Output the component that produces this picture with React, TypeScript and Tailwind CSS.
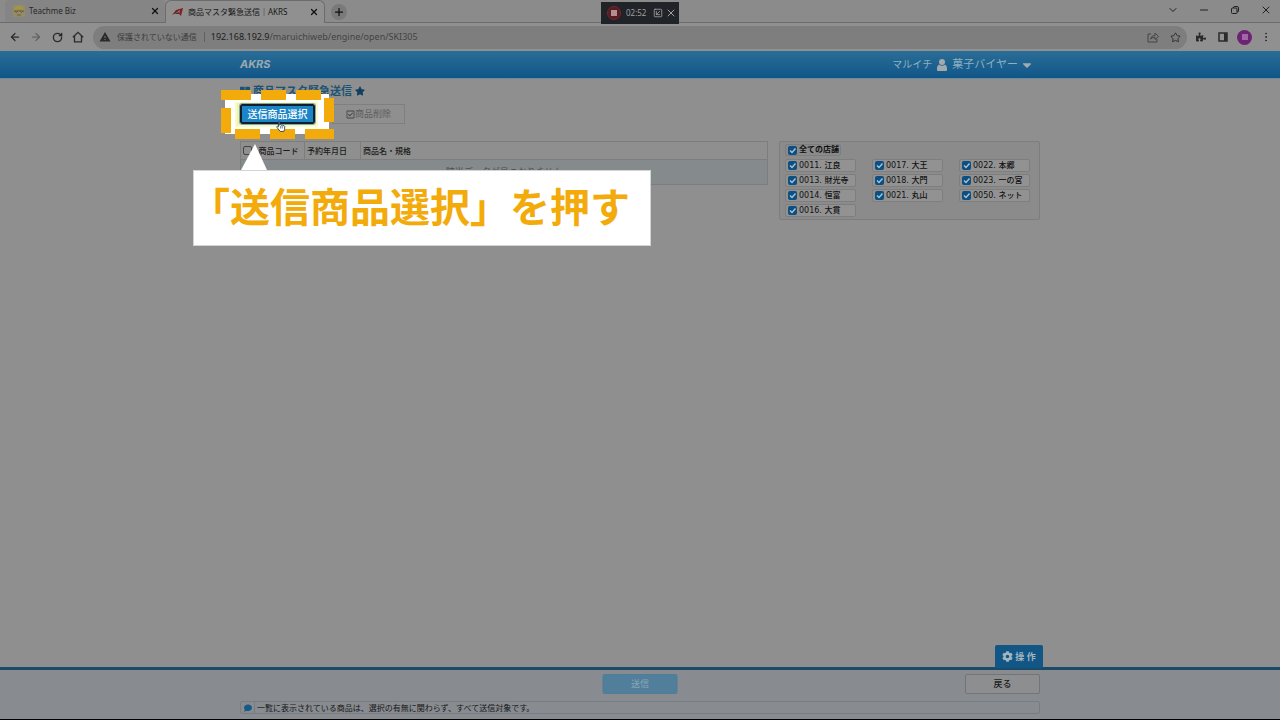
import type { ReactNode } from 'react'
import { FaCaretDown, FaCog, FaComment, FaPuzzlePiece, FaRegCheckSquare, FaStar, FaThLarge } from 'react-icons/fa'
import { MdWarning } from 'react-icons/md'
import { ArrowLeft, ArrowRight, ChevronDown, Minus, MoreVertical, Plus, RotateCw, SquareArrowDownLeft, Star, X } from 'lucide-react'

const storeColumns = [
  ['0011. 江良', '0013. 財光寺', '0014. 恒富', '0016. 大貫'],
  ['0017. 大王', '0018. 大門', '0021. 丸山'],
  ['0022. 本郷', '0023. 一の宮', '0050. ネット'],
]

function IconButton({ label, children }: { label: string; children: ReactNode }) {
  return (
    <button type="button" aria-label={label} className="flex size-4 shrink-0 items-center justify-center">
      {children}
    </button>
  )
}

function TabStrip() {
  return (
    <div className="relative flex h-[23px] items-end border-b border-[#6c6c6c] bg-[#8b8b8b] pl-[5px]">
      <div className="flex h-[22px] w-40 items-center rounded-t bg-[#858585] pl-2 pr-0.5">
        <svg viewBox="0 0 12 12" className="mr-1 size-3" aria-hidden="true">
          <rect width="12" height="12" rx="1" fill="#958b64" />
          <path d="M1 5Q1 1 6 1T11 5L9 4 6 5 3 4Z" fill="#a39446" />
          <path d="M1 6h4q1-1 2 0h4M2 6q1 3 3 0M7 6q2 3 3 0M4 10h4" fill="none" stroke="#5d563b" strokeWidth=".8" />
        </svg>
        <span className="flex-1 text-[8px] text-[#282828]">Teachme Biz</span>
        <IconButton label="タブを閉じる">
          <X className="size-2.5 text-[#111]" strokeWidth={3} />
        </IconButton>
      </div>
      <div className="-mb-px flex h-[23px] w-40 items-center rounded-t-md border border-b-0 border-[#6c6c6c] bg-[#909090] pl-1.5 pr-0.5">
        <svg viewBox="0 0 12 10" className="mr-1 h-2.5 w-3" aria-hidden="true">
          <path d="M0 8 4 3 11 1 9 9 7 7 8 3 4 6Z" fill="#811f23" />
          <path d="M2 7 7 5 7 7Z" fill="#3f3536" />
        </svg>
        <span className="flex-1 whitespace-nowrap text-[8px] text-[#171717]">商品マスタ緊急送信｜AKRS</span>
        <IconButton label="タブを閉じる">
          <X className="size-2.5 text-[#111]" strokeWidth={3} />
        </IconButton>
      </div>
      <button type="button" aria-label="新しいタブ" className="mb-0.5 ml-1.5 flex size-4 items-center justify-center rounded-full bg-[#7a7a7a]">
        <Plus className="size-3 text-[#111]" strokeWidth={2.5} />
      </button>
      <div className="ml-auto flex items-center gap-[15px] self-start pr-1.5 pt-0.5 text-[#202020]">
        <IconButton label="タブを検索">
          <ChevronDown className="size-3" />
        </IconButton>
        <IconButton label="最小化">
          <Minus className="size-3" />
        </IconButton>
        <IconButton label="元に戻す">
          <svg viewBox="0 0 10 10" className="size-2.5" fill="none" stroke="currentColor">
            <rect x="1.5" y="3" width="5.5" height="5.5" rx="1" />
            <path d="M3.5 3V2.5Q3.5 1.500 4.500 1.500H7Q8.500 1.500 8.500 3V6Q8.500 7 7 7" />
          </svg>
        </IconButton>
        <IconButton label="閉じる">
          <X className="size-3" />
        </IconButton>
      </div>
      <Recorder />
    </div>
  )
}

function Recorder() {
  return (
    <div className="absolute left-1/2 top-0.5 z-10 flex h-[22px] w-[78px] -translate-x-1/2 items-center bg-[#202327] pl-1.5 text-[#a0a0a0]">
      <button type="button" aria-label="録画停止" className="flex size-3.5 items-center justify-center rounded-full border border-[#7c2329] bg-[#521f24]">
        <span className="size-1.5 bg-[#b58e90]" />
      </button>
      <span className="ml-[5px] flex-1 text-[8px]">02:52</span>
      <SquareArrowDownLeft className="size-2.5" />
      <X className="mx-0.5 size-3" />
    </div>
  )
}

function Toolbar() {
  return (
    <div className="flex h-7 items-center bg-[#909090] pl-[7px] pr-1.5 text-[#2b2b2b]">
      <div className="flex items-center gap-[5px]">
        <IconButton label="戻る">
          <ArrowLeft className="size-3" strokeWidth={2.5} />
        </IconButton>
        <IconButton label="進む">
          <ArrowRight className="size-3 text-[#636363]" strokeWidth={2.5} />
        </IconButton>
        <IconButton label="再読み込み">
          <RotateCw className="size-[11px]" strokeWidth={3} />
        </IconButton>
        <IconButton label="ホーム">
          <svg viewBox="0 0 12 12" className="size-3" fill="none" stroke="currentColor" strokeWidth="1.3">
            <path d="M.8 6.300 6 1.300 11.200 6.300M2.500 5V10.800H9.500V5" />
          </svg>
        </IconButton>
      </div>
      <div className="ml-[7px] flex h-[23px] flex-1 items-center rounded-full bg-[#7e7e7e] pl-1.5 pr-1">
        <MdWarning className="size-3" />
        <span className="ml-1.5 whitespace-nowrap text-[8px] text-[#3c3c3c]">保護されていない通信</span>
        <span className="ml-[7px] mr-1.5 h-2.5 w-px bg-[#606060]" />
        <span className="text-[9px] text-[#444]">
          <span className="text-[#1d1d1d]">192.168.192.9</span>/maruichiweb/engine/open/SKI305
        </span>
        <div className="ml-auto flex items-center gap-1.5">
          <IconButton label="共有">
            <svg viewBox="0 0 12 12" className="size-3" fill="none" stroke="#444">
              <path d="M4 3H1v8h9V8M3.500 8Q4 4.500 8 4.500V2l3.500 3.500L8 8.500V6.500Q5 6.500 3.500 8Z" />
            </svg>
          </IconButton>
          <IconButton label="ブックマーク">
            <Star className="size-[11px]" />
          </IconButton>
        </div>
      </div>
      <div className="ml-1.5 flex items-center gap-1.5">
        <IconButton label="拡張機能">
          <FaPuzzlePiece className="size-2.5" />
        </IconButton>
        <IconButton label="サイドパネル">
          <svg viewBox="0 0 10 10" className="size-2.5">
            <rect x="1" y="1" width="8" height="8" fill="none" stroke="currentColor" strokeWidth="1.5" />
            <path d="M6 1h3v8H6z" fill="currentColor" />
          </svg>
        </IconButton>
        <button type="button" aria-label="プロフィール" className="flex size-[15px] items-center justify-center rounded-full bg-[#6b2473]">
          <span className="size-1.5 bg-[#a266a6]" />
        </button>
        <IconButton label="メニュー">
          <MoreVertical className="size-3" />
        </IconButton>
      </div>
    </div>
  )
}

function AppHeader() {
  return (
    <header className="h-7 border-b border-[#6b8ba0] bg-linear-to-b from-[#2a6d97] to-[#0f5688]">
      <div className="mx-auto flex h-full max-w-[800px] items-center justify-between pr-1.5 text-[#9aa9b1]">
        <a href="#top" className="font-[Inter,sans-serif] text-[11px] font-bold italic">AKRS</a>
        <button type="button" className="flex items-center gap-1 text-[11px] text-[#8fb0c1]">
          <span className="text-[10px]">マルイチ</span>
          <svg viewBox="0 0 12 12" className="size-3" fill="#a3a9ad" aria-hidden="true">
            <circle cx="6" cy="3" r="3" />
            <path d="M3 5.500Q6 8 9 5.500 11 6.500 11 9V11Q11 12 10 12H2Q1 12 1 11V9Q1 6.500 3 5.500Z" />
          </svg>
          <span>菓子バイヤー</span>
          <FaCaretDown className="-ml-0.5 size-3.5 text-[#a3a9ad]" />
        </button>
      </div>
    </header>
  )
}

// Highlights the send-item button with a dashed marquee
function Spotlight() {
  return (
    <div className="absolute -left-5 -top-3.5">
      <svg width="114" height="50" viewBox="0 0 114 50" aria-hidden="true">
        <path d="M5 4h104v40H5z" fill="#fff" />
        <path d="M15 12h83v25H15z" fill="#fafac8" />
        <path d="M17 13h79v22H17z" fill="#eff3ad" />
        <path
          d="M1 0h30v10H1zM41 0h25v10H41zM76 0h25v10H76zM104 8h10v24h-10zM85 39h29v10H85zM110 42h4v7h-4zM50 39h25v10H50zM15 39h25v10H15zM1 18h10v25H1z"
          fill="#f2ab0a"
        />
      </svg>
    </div>
  )
}

function HandCursor() {
  return (
    <svg viewBox="0 0 12 14" className="absolute left-9 top-4 h-3 w-2.5" aria-hidden="true">
      <path
        d="M3 8V1.500Q3.700.5 4.400 1.500V6l1-.7 1 1 1-.6 1 1 1-.3 1 1V11l-1 2.500H5L1 8.500Q1 7 2 7.300Z"
        fill="#fff"
        stroke="#1d3147"
      />
      <path d="M5.500 7v3M7.500 7v3" stroke="#1d3147" strokeWidth=".7" />
    </svg>
  )
}

function Callout() {
  return (
    <div className="absolute -left-[47px] top-10 z-20">
      <svg width="26" height="26" viewBox="0 0 26 26" className="ml-12" aria-hidden="true">
        <path d="M0 26 14 0 26 26Z" fill="#fff" />
      </svg>
      <p className="h-[76px] w-[458px] whitespace-nowrap border border-[#d4d4d4] bg-white -indent-1 text-[40px] font-bold leading-[72px] text-[#f2ab0a]">
        「送信商品選択」を押す
      </p>
    </div>
  )
}

function StoreCheck({ label, bold }: { label: string; bold?: boolean }) {
  return (
    <label
      className={
        bold
          ? 'flex h-3 w-[56px] items-center gap-0.5 whitespace-nowrap rounded-xs border border-[#7e7e7e] px-0.5 font-bold'
          : 'flex h-[13px] w-[71px] items-center gap-0.5 whitespace-nowrap rounded-xs border border-[#7e7e7e] bg-[#929292] px-0.5'
      }
    >
      <span className="relative flex size-[9px] shrink-0">
        <input type="checkbox" defaultChecked className="size-[9px] appearance-none rounded-xs bg-[#0b4f83]" />
        <svg viewBox="0 0 9 9" className="pointer-events-none absolute inset-0 size-[9px]" fill="none" stroke="#adc3d0" strokeWidth="1.4">
          <path d="M2 4.500 4 6.500 7.500 2.500" />
        </svg>
      </span>
      {label}
    </label>
  )
}

function StorePanel() {
  return (
    <section className="w-[261px] rounded-xs border border-[#7d7d7d] bg-[#8b8b8b] px-[5px] pb-0.5 pt-0.5 font-['DejaVu_Sans','Noto_Sans_CJK_JP',sans-serif] text-[8px] font-medium leading-[10px] text-[#111]">
      <StoreCheck label="全ての店舗" bold />
      <div className="mt-[3px] flex gap-4">
        {storeColumns.map((stores) => (
          <div key={stores[0]} className="flex flex-col gap-0.5">
            {stores.map((store) => (
              <StoreCheck key={store} label={store} />
            ))}
          </div>
        ))}
      </div>
    </section>
  )
}

function ItemTable() {
  return (
    <table className="flex-1 border-collapse border border-[#7d7d7d] text-[8px] leading-[10px] text-[#1b1b1b]">
      <thead>
        <tr className="h-[18px] text-left">
          <th className="w-4 pl-0.5">
            <input type="checkbox" aria-label="すべて選択" className="block size-[9px] appearance-none rounded-xs border border-[#444]" />
          </th>
          <th className="w-[48px] px-0.5 font-medium">商品コード</th>
          <th className="w-14 border-l border-[#7d7d7d] px-0.5 font-medium">予約年月日</th>
          <th className="border-l border-[#7d7d7d] px-0.5 font-medium">商品名・規格</th>
        </tr>
      </thead>
      <tbody>
        <tr className="h-[25px] border-t border-[#7d7d7d] bg-[#858b8d]">
          <td colSpan={4} className="text-center text-[9px] text-[#4d4d4d]">該当データが見つかりません</td>
        </tr>
      </tbody>
    </table>
  )
}

function Footer() {
  return (
    <footer className="relative border-b border-black border-t-[#1c4b69] bg-[#888b90] [border-top-style:solid] [border-top-width:3px]">
      <div className="mx-auto max-w-[800px] pb-[5px] pt-1">
        <div className="relative flex h-5 items-center justify-end">
          <button type="button" className="absolute left-1/2 h-5 w-[75px] -translate-x-1/2 rounded-xs border border-[#4e7d98] bg-[#517f9b] text-[9px] text-[#8ca6b6]">
            送信
          </button>
          <button type="button" className="h-5 w-[75px] rounded-xs border border-[#747474] bg-[#8d8e90] text-[9px] font-medium text-[#1d1d1d]">
            戻る
          </button>
          <button type="button" className="absolute -right-[3px] -top-[29px] flex h-[23px] w-12 items-center justify-center gap-0.5 rounded-t-xs bg-[#115685] text-[9px] font-bold text-[#a4b5c0]">
            <FaCog className="size-[11px]" />
            操 作
          </button>
        </div>
        <div className="mt-[7px] flex h-[13px] items-center rounded-xs border border-[#777d84] text-[8px] leading-[11px] text-[#171717]">
          <span className="flex h-full w-3.5 items-center justify-center border-r border-[#777d84]">
            <FaComment className="size-2 text-[#155986]" />
          </span>
          <p className="ml-0.5">一覧に表示されている商品は、選択の有無に関わらず、すべて送信対象です。</p>
        </div>
      </div>
    </footer>
  )
}

export default function App() {
  return (
    <div id="top" lang="ja" className="flex min-h-screen flex-col overflow-x-hidden bg-[#8f8f8f] font-['Noto_Sans','Noto_Sans_CJK_JP',sans-serif]">
      <TabStrip />
      <Toolbar />
      <AppHeader />
      <main className="mx-auto w-full max-w-[800px] flex-1">
        <h1 className="flex h-6 items-center gap-[3px] text-[11px] font-bold text-[#1b5374]">
          <FaThLarge className="size-2.5" />
          商品マスタ緊急送信
          <FaStar className="size-2.5 text-[#123f5f]" />
        </h1>
        <div className="relative mt-px flex h-5 gap-[17px]">
          <Spotlight />
          <div className="relative flex">
            <button type="button" className="h-5 w-[75px] rounded-xs border-2 border-[#101e2e] bg-[#1c85c7] text-[10px] font-medium leading-4 text-white outline-1 outline-[#7eaaa0]">
              送信商品選択
            </button>
            <HandCursor />
          </div>
          <button type="button" className="flex h-5 w-[73px] items-center justify-center border border-[#7f7f7f] text-[9px] text-[#5d5d5d]">
            <FaRegCheckSquare className="size-[9px] text-[#444]" />
            商品削除
          </button>
          <Callout />
        </div>
        <div className="mt-[17px] flex items-start gap-[11px]">
          <ItemTable />
          <StorePanel />
        </div>
      </main>
      <Footer />
    </div>
  )
}
